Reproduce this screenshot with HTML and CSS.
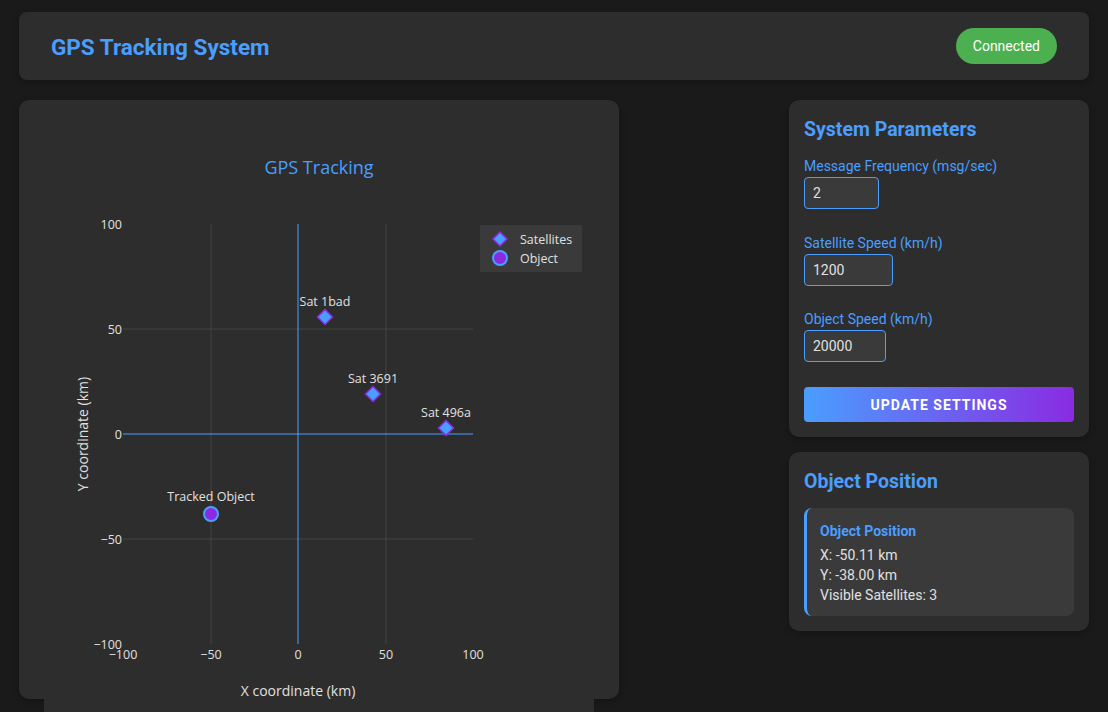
FILE: index.html
```html
<!DOCTYPE html>
<html lang="en">
<head>
<meta charset="utf-8">
<title>GPS Tracking System</title>
<link rel="stylesheet" href="styles.css">
</head>
<body>
<div class="app">
  <header class="header">
    <h1 class="header-title">GPS Tracking System</h1>
    <span class="status">Connected</span>
  </header>
  <main class="main">
    <section class="plot-card">
      <svg class="plot" width="550" height="600" viewBox="0 0 550 600">
        <text class="plot-title" x="275" y="50" text-anchor="middle">GPS Tracking</text>
        <!-- grid -->
        <g class="grid">
          <line x1="167" y1="100" x2="167" y2="520"/>
          <line x1="342" y1="100" x2="342" y2="520"/>
          <line x1="79" y1="205" x2="429" y2="205"/>
          <line x1="79" y1="415" x2="429" y2="415"/>
        </g>
        <g class="zero">
          <line x1="254" y1="100" x2="254" y2="520"/>
          <line x1="79" y1="310" x2="429" y2="310"/>
        </g>
        <!-- y ticks -->
        <g class="tick" text-anchor="end">
          <text x="78" y="104.5">100</text>
          <text x="78" y="209.5">50</text>
          <text x="78" y="314.5">0</text>
          <text x="78" y="419.5">−50</text>
          <text x="78" y="524.5">−100</text>
        </g>
        <!-- x ticks -->
        <g class="tick" text-anchor="middle">
          <text x="79" y="535">−100</text>
          <text x="167" y="535">−50</text>
          <text x="254" y="535">0</text>
          <text x="342" y="535">50</text>
          <text x="429" y="535">100</text>
        </g>
        <text class="axis-title" x="254" y="572" text-anchor="middle">X coordinate (km)</text>
        <text class="axis-title" x="0" y="0" text-anchor="middle" transform="translate(44 310) rotate(-90)">Y coordinate (km)</text>
        <!-- points -->
        <g class="pt-label" text-anchor="middle">
          <text x="281" y="182">Sat 1bad</text>
          <text x="329" y="259">Sat 3691</text>
          <text x="402" y="293">Sat 496a</text>
          <text x="167" y="377">Tracked Object</text>
        </g>
        <g class="sat">
          <path d="M281 185.5 L288.5 193 L281 200.5 L273.5 193 Z"/>
          <path d="M329 262.5 L336.5 270 L329 277.5 L321.5 270 Z"/>
          <path d="M402 296.5 L409.5 304 L402 311.5 L394.5 304 Z"/>
        </g>
        <circle class="obj" cx="167" cy="390" r="7"/>
        <!-- legend -->
        <rect class="legend-bg" x="436" y="101" width="102" height="47"/>
        <path class="sat" d="M456 108 L463 115 L456 122 L449 115 Z"/>
        <circle class="obj" cx="456" cy="134" r="7"/>
        <g class="legend-text">
          <text x="476" y="119.5">Satellites</text>
          <text x="476" y="138.5">Object</text>
        </g>
      </svg>
    </section>
    <aside class="side">
      <section class="card">
        <h2 class="card-title">System Parameters</h2>
        <div class="field">
          <label class="field-label" for="freq">Message Frequency (msg/sec)</label>
          <input class="field-input field-input--freq" id="freq" type="text" value="2">
        </div>
        <div class="field">
          <label class="field-label" for="sat">Satellite Speed (km/h)</label>
          <input class="field-input field-input--sat" id="sat" type="text" value="1200">
        </div>
        <div class="field">
          <label class="field-label" for="obj">Object Speed (km/h)</label>
          <input class="field-input field-input--obj" id="obj" type="text" value="20000">
        </div>
        <button class="update-btn" type="button">Update Settings</button>
      </section>
      <section class="card">
        <h2 class="card-title">Object Position</h2>
        <div class="info">
          <div class="info-title">Object Position</div>
          <div class="info-line">X: -50.11 km</div>
          <div class="info-line">Y: -38.00 km</div>
          <div class="info-line">Visible Satellites: 3</div>
        </div>
      </section>
    </aside>
  </main>
</div>
</body>
</html>
```
FILE: styles.css
```css
* { box-sizing: border-box; }
html, body { margin: 0; padding: 0; }
body {
  background: #1a1a1a;
  color: #e0e0e0;
  font-family: Roboto, "Noto Sans", sans-serif;
  height: 712px;
  overflow: hidden;
}
.app { padding: 12px 19px 0; }
.header {
  height: 68px;
  background: #2d2d2d;
  border-radius: 8px;
  padding: 0 32px;
  display: flex;
  align-items: center;
  justify-content: space-between;
  box-shadow: 0 2px 6px rgba(0,0,0,0.25);
}
.header-title {
  margin: 0;
  padding-top: 2px;
  color: #4a9eff;
  font-size: 22.5px;
  font-weight: 700;
}
.status {
  background: #4caf50;
  color: #fff;
  font-size: 14px;
  height: 36px;
  line-height: 36px;
  padding: 0 17px;
  border-radius: 18px;
}
.main {
  margin-top: 20px;
  display: flex;
  justify-content: space-between;
  align-items: flex-start;
}
.plot-card {
  width: 600px;
  height: 599px;
  background: #2d2d2d;
  border-radius: 10px;
  padding: 24px 25px;
  box-shadow: 0 2px 6px rgba(0,0,0,0.25);
}
.plot {
  display: block;
  background: #2d2d2d;
  font-family: "Open Sans", "Noto Sans", sans-serif;
}
.plot-title { fill: #4a9eff; font-size: 18px; }
.grid line { stroke: #444; stroke-width: 1; }
.zero line { stroke: #4a9eff; stroke-width: 1; }
.tick text { fill: #e0e0e0; font-size: 12.5px; }
.axis-title { fill: #e0e0e0; font-size: 14px; }
.pt-label text { fill: #e0e0e0; font-size: 12.5px; }
.sat path, path.sat { fill: #4a9eff; stroke: #8a2be2; stroke-width: 1.5; }
.obj { fill: #8a2be2; stroke: #4a9eff; stroke-width: 2; }
.legend-bg { fill: #3a3a3a; }
.legend-text text { fill: #e0e0e0; font-size: 12.5px; }

.side {
  width: 300px;
  display: flex;
  flex-direction: column;
  gap: 15px;
}
.card {
  background: #2d2d2d;
  border-radius: 10px;
  padding: 19px 15px 15px;
  box-shadow: 0 2px 6px rgba(0,0,0,0.25);
}
.card-title {
  margin: 0 0 15px;
  color: #4a9eff;
  font-size: 19.5px;
  line-height: 22px;
  font-weight: 700;
}
.field { margin-bottom: 23.5px; }
.field:last-of-type { margin-bottom: 25px; }
.field-label {
  display: block;
  color: #4a9eff;
  font-size: 14px;
  line-height: 20px;
  margin-bottom: 1px;
}
.field-input {
  display: block;
  height: 32px;
  background: #3a3a3a;
  border: 1px solid #4a9eff;
  border-radius: 4px;
  color: #e0e0e0;
  font-family: inherit;
  font-size: 14px;
  padding: 0 8px;
  outline: none;
}
.field-input--freq { width: 75px; }
.field-input--sat { width: 89px; }
.field-input--obj { width: 82px; }
.update-btn {
  display: block;
  width: 100%;
  height: 35px;
  border: none;
  border-radius: 4px;
  background: linear-gradient(90deg, #4a9eff, #8a2be2);
  color: #fff;
  font-family: inherit;
  font-size: 14px;
  font-weight: 700;
  letter-spacing: 1px;
  text-transform: uppercase;
}
.info {
  background: #3a3a3a;
  border-left: 3px solid #4a9eff;
  border-radius: 8px;
  padding: 13px 13px 11px;
}
.info-title {
  color: #4a9eff;
  font-weight: 700;
  font-size: 14px;
  line-height: 20px;
  margin-bottom: 4px;
}
.info-line {
  font-size: 14px;
  line-height: 20px;
  color: #e0e0e0;
}
```
